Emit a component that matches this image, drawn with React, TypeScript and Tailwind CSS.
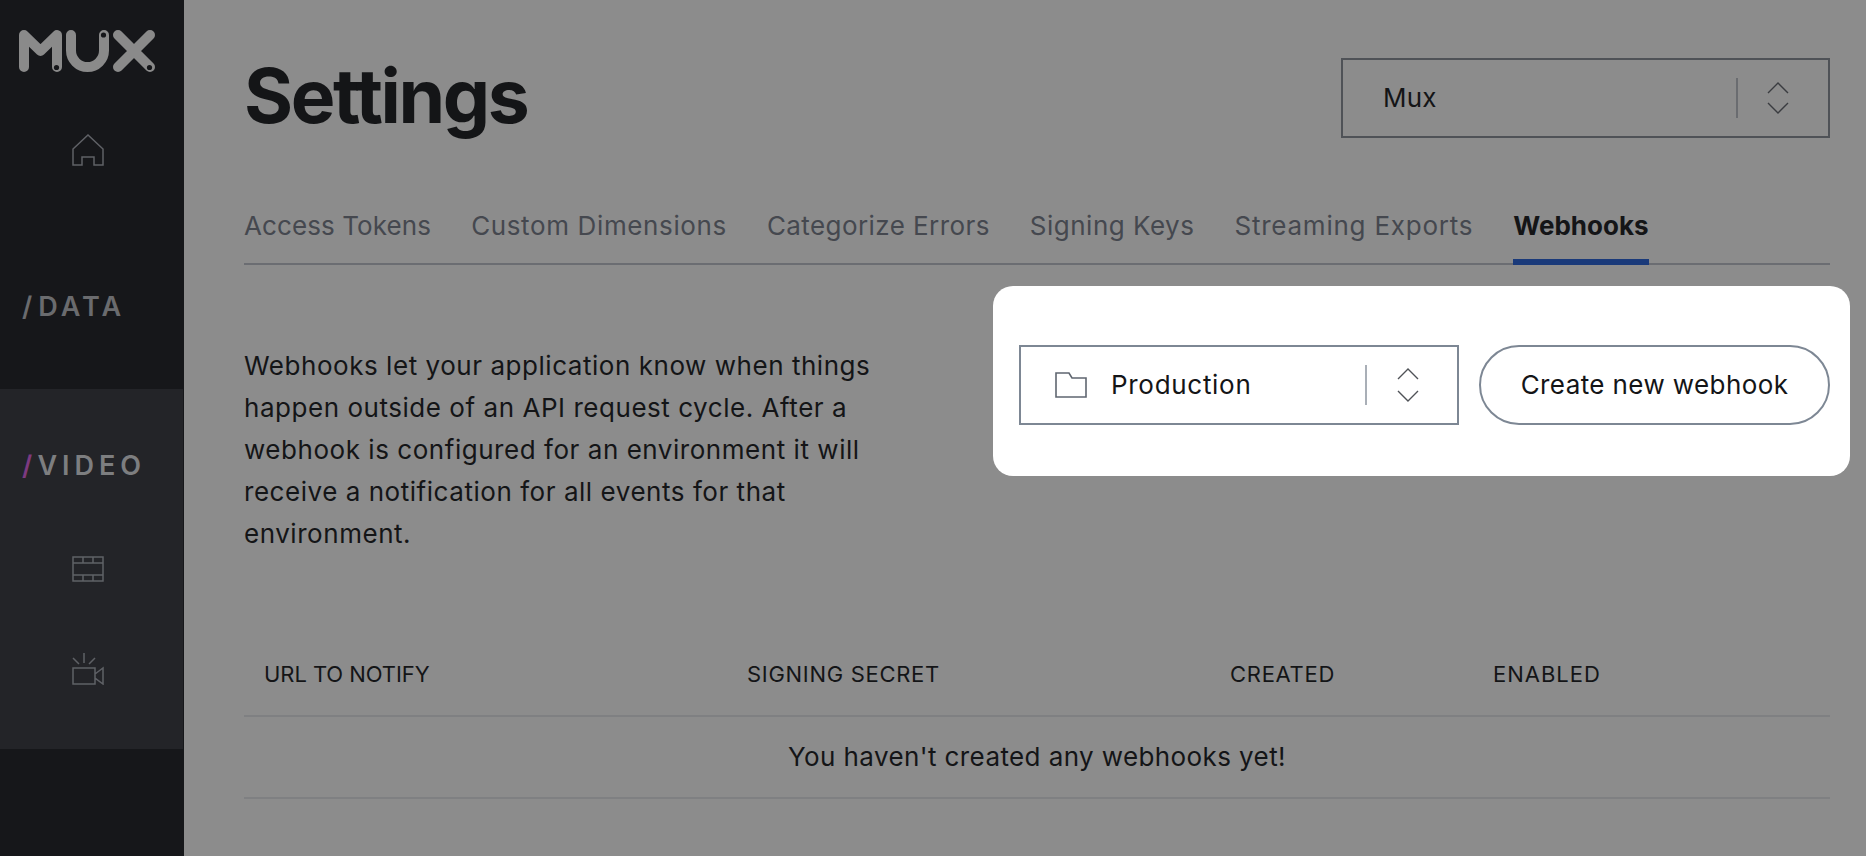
const tabs = [
  { label: "Access Tokens", tracking: "tracking-[0.1px]" },
  { label: "Custom Dimensions", tracking: "tracking-[0.63px]" },
  { label: "Categorize Errors", tracking: "tracking-[0.42px]" },
  { label: "Signing Keys", tracking: "tracking-[0.5px]" },
  { label: "Streaming Exports", tracking: "tracking-[0.77px]" },
];
const columns = [
  { label: "URL TO NOTIFY", width: "w-[483px] tracking-[-0.07px]" },
  { label: "SIGNING SECRET", width: "w-[483px] tracking-[0.7px]" },
  { label: "CREATED", width: "w-[263px] tracking-[0.7px]" },
  { label: "ENABLED", width: "tracking-[1px]" },
];

function MuxLogo() {
  return (
    <svg viewBox="0 0 136 42" className="h-[42px] w-[136px]" fill="none">
      <g stroke="#8a8a8a" strokeWidth="10" strokeLinecap="round" strokeLinejoin="round">
        <path d="M5 37V5L21.5 21L38 5V37" />
        <path d="M52 5v15.5a16.5 16.5 0 0 0 33 0V5" />
        <path d="M99 5l32 32M131 5l-32 32" />
      </g>
      <circle cx="37.5" cy="37.5" r="2.6" fill="#16171a" />
      <circle cx="84.5" cy="5" r="2.6" fill="#16171a" />
      <circle cx="130.5" cy="37.5" r="2.6" fill="#16171a" />
    </svg>
  );
}

function Stepper({ stroke, gap }: { stroke: string; gap: number }) {
  return (
    <svg viewBox={`0 0 22 ${gap + 12}`} className="w-[22px]" style={{ height: gap + 12 }} fill="none" stroke={stroke} strokeWidth="1.4">
      <path d="M1 11 11 1l10 10" />
      <path d={`M1 ${gap + 1} 11 ${gap + 11}l10-10`} />
    </svg>
  );
}

export default function App() {
  return (
    <div className="flex h-[856px] w-[1866px] overflow-hidden bg-[#8c8c8c] font-['Inter','Liberation_Sans',sans-serif] text-[#141517]">
      <aside className="flex w-[184px] shrink-0 flex-col bg-[#16171a]">
        <div className="pl-[19px] pt-[30px]">
          <MuxLogo />
        </div>
        <div className="flex justify-center pr-[8px] pt-[62px]">
          <svg viewBox="0 0 32 32" className="h-8 w-8" fill="none" stroke="#5f6166" strokeWidth="1.5">
            <path d="M1 15 16 1l15 14v16H22v-8H10v8H1z" />
          </svg>
        </div>
        <div className="pl-[22px] pt-[127px] text-[27px] leading-none font-semibold tracking-[4px] text-[#6a6b6e]">
          <span className="mr-[2px]">/</span>DATA
        </div>
        <div className="mt-[69px] flex h-[360px] flex-col border-r border-[#16171a] bg-[#232428]">
          <div className="pl-[22px] pt-[63px] text-[27px] leading-none font-semibold tracking-[5px] text-[#7d7e80]">
            <span className="text-[#7d3a80]">/</span>VIDEO
          </div>
          <div className="flex justify-center pr-[7px] pt-[77px]">
            <svg viewBox="0 0 32 26" className="h-[26px] w-8" fill="none" stroke="#5f6166" strokeWidth="1.5">
              <path d="M1 1h30v24H1zM1 7h30M1 19h30M11 1v6M21 1v6M11 19v6M21 19v6" />
            </svg>
          </div>
          <div className="flex justify-center pr-[7px] pt-[71px]">
            <svg viewBox="0 0 32 32" className="h-8 w-8" fill="none" stroke="#5f6166" strokeWidth="1.5">
              <path d="M1 15h22v16H1zM23 21l8-6v16l-8-6zM12 0v10M1 5l6 6M23 5l-6 6" />
            </svg>
          </div>
        </div>
      </aside>
      <main className="flex-1 pl-[60px] pr-[36px]">
        <div className="flex h-[187px] justify-between">
          <h1 className="pt-[52px] text-[75px] leading-[88px] font-bold tracking-[-2.4px] text-[#141517]">Settings</h1>
          <div className="mt-[58px] flex h-[80px] w-[489px] items-center border-2 border-[#4f5257] pl-[40px] text-[26px] tracking-[0.2px]">
            <span className="flex-1 pb-[2px]">Mux</span>
            <div className="h-[40px] w-[2px] bg-[#6a6c70]" />
            <div className="flex w-[90px] justify-center pr-[10px]">
              <Stepper stroke="#3a3c40" gap={20} />
            </div>
          </div>
        </div>
        <nav className="flex h-[78px] gap-[40px] border-b-2 border-[#6b6d72] text-[26px]">
          {tabs.map((tab) => (
            <span key={tab.label} className={`pt-[19px] text-[#45484f] ${tab.tracking}`}>{tab.label}</span>
          ))}
          <span className="-mb-[2px] border-b-[6px] border-[#1a3a7a] pt-[19px] font-bold text-[#141517]">Webhooks</span>
        </nav>
        <div className="relative flex h-[341px] items-start justify-between">
          <p className="w-[680px] pt-[80px] text-[26px] leading-[42px] tracking-[0.54px]">
            Webhooks let your application know when things happen outside of an API request cycle. After a webhook is configured for an environment it will receive a notification for all events for that environment.
          </p>
          <div className="absolute -right-[20px] top-[21px] flex h-[190px] w-[857px] items-start gap-[20px] rounded-[20px] bg-white pl-[26px] pr-[20px] pt-[59px]">
            <div className="flex h-[80px] w-[440px] items-center border-2 border-[#7d8794] pl-[34px] text-[26px] tracking-[0.7px]">
              <svg viewBox="0 0 32 26" className="h-[26px] w-8" fill="none" stroke="#5f6670" strokeWidth="1.6">
                <path d="M1 1h13l3 5h14v19H1z" />
              </svg>
              <span className="flex-1 pb-[2px] pl-[24px]">Production</span>
              <div className="h-[40px] w-[2px] bg-[#a9afb7]" />
              <div className="flex w-[90px] justify-center pr-[8px]">
                <Stepper stroke="#4f5257" gap={22} />
              </div>
            </div>
            <button className="h-[80px] flex-1 rounded-full border-2 border-[#7d8794] pb-[2px] text-[26px] tracking-[0.4px]">Create new webhook</button>
          </div>
        </div>
        <div className="flex h-[111px] items-end border-b-2 border-[#7f8082] pb-[30px] pl-[20px] text-[22px] leading-none">
          {columns.map((col) => (
            <span key={col.label} className={col.width}>{col.label}</span>
          ))}
        </div>
        <div className="flex h-[82px] items-center justify-center border-b-2 border-[#7f8082] pb-[2px] text-[26px] tracking-[0.4px]">
          You haven't created any webhooks yet!
        </div>
      </main>
    </div>
  );
}
